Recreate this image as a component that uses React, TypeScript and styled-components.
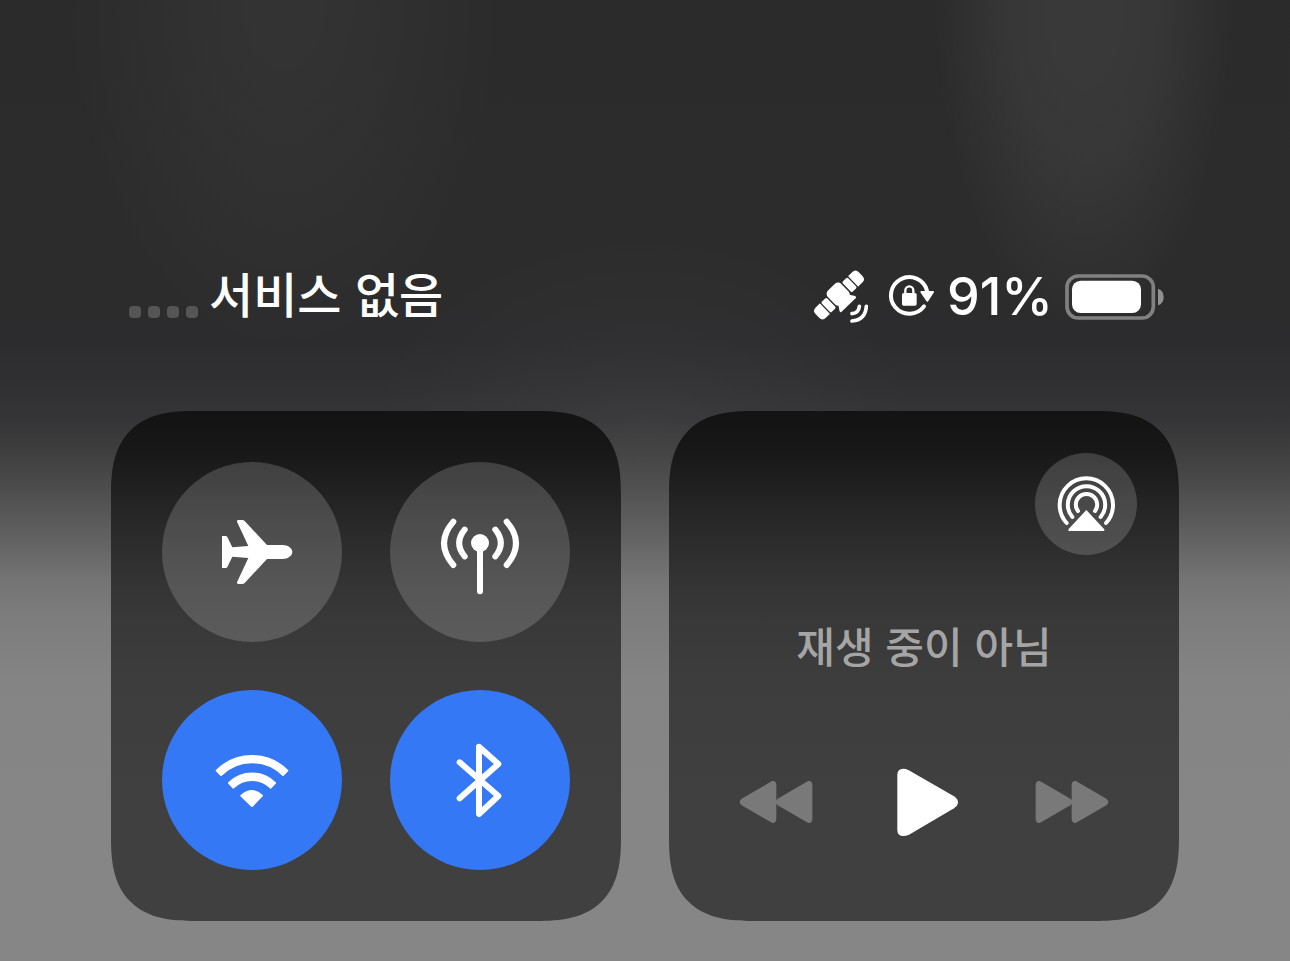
import React from "react";
import styled, { createGlobalStyle } from "styled-components";

const GlobalStyle = createGlobalStyle`
  *, *::before, *::after { box-sizing: border-box; }
  body {
    margin: 0;
    background: #868686;
    color: #fff;
    font-family: Inter, "Noto Sans CJK KR", sans-serif;
    -webkit-font-smoothing: antialiased;
  }
`;

const Screen = styled.main`
  min-height: 100vh;
  padding: 264px 111px 40px;
  background:
    radial-gradient(
      ellipse 150px 330px at 84% 0,
      rgba(255, 255, 255, 0.065) 20%,
      rgba(255, 255, 255, 0.055) 50%,
      rgba(255, 255, 255, 0.02) 82%,
      transparent
    ),
    radial-gradient(
      ellipse 220px 360px at 22% 0,
      rgba(255, 255, 255, 0.04) 10%,
      rgba(255, 255, 255, 0.025) 50%,
      transparent
    ),
    radial-gradient(ellipse 280px 200px at 50% 430px, rgba(255, 255, 255, 0.035), transparent),
    linear-gradient(
      #2b2b2b 0,
      #2c2c2c 240px,
      #2c2c2e 340px,
      #303033 385px,
      #353537 420px,
      #3e3e3f 450px,
      #494949 480px,
      #575757 513px,
      #656565 547px,
      #747474 580px,
      #7c7c7c 613px,
      #848484 680px,
      #868686 800px
    );
`;

const StatusBar = styled.header`
  display: flex;
  align-items: center;
  justify-content: space-between;
  height: 66px;
  margin-bottom: 81px;
  padding: 0 15px 0 18px;
`;

const StatusGroup = styled.div`
  display: flex;
  align-items: center;
  gap: 11px;
`;

const Signal = styled.div`
  display: flex;
  gap: 7px;
  padding-top: 30px;
`;

const SignalDot = styled.span`
  width: 12px;
  height: 12px;
  border-radius: 4px;
  background: #555;
`;

const Carrier = styled.span`
  padding-bottom: 10px;
  font-family: "Noto Sans CJK KR", sans-serif;
  font-size: 48px;
  font-weight: 500;
  line-height: 56px;
`;

const BatteryLevel = styled.span`
  font-size: 52px;
  font-weight: 500;
  line-height: 66px;
`;

const Modules = styled.div`
  display: grid;
  grid-template-columns: 1fr 1fr;
  gap: 48px;
`;

const Module = styled.section`
  min-height: 510px;
  border-radius: 68px;
  background: linear-gradient(
    #131313 0,
    #171717 36px,
    #1e1e1e 69px,
    #262626 102px,
    #2d2d2d 136px,
    #333 169px,
    #383838 202px,
    #3d3d3d 269px,
    #404040 400px
  );
  @supports (corner-shape: superellipse(1.5)) {
    border-radius: 84px;
    corner-shape: superellipse(1.4);
  }
`;

const Connectivity = styled(Module)`
  display: grid;
  grid-template-columns: 180px 180px;
  grid-template-rows: 180px 180px;
  place-content: center;
  gap: 48px;
`;

const NowPlaying = styled(Module)`
  display: flex;
  flex-direction: column;
  padding: 42px 42px 84px;
`;

const IconButton = styled.button`
  display: flex;
  align-items: center;
  justify-content: center;
  padding: 0;
  border: 0;
  background: none;
  color: inherit;
  cursor: pointer;

  &:disabled {
    color: #797979;
    cursor: default;
  }
`;

const RoundButton = styled(IconButton)<{ $size: number; $active?: boolean }>`
  width: ${(p) => p.$size}px;
  height: ${(p) => p.$size}px;
  border-radius: 50%;
  background: ${(p) => (p.$active ? "#3478f6" : "rgba(255, 255, 255, 0.17)")};
`;

const AirPlaySlot = styled.div`
  display: flex;
  justify-content: flex-end;
`;

const TrackTitle = styled.h2`
  margin: 58px 0 0;
  color: #a5a5a5;
  font-family: "Noto Sans CJK KR", sans-serif;
  font-size: 42px;
  font-weight: 500;
  line-height: 64px;
  text-align: center;
`;

const Transport = styled.div`
  display: flex;
  align-items: center;
  justify-content: space-between;
  margin-top: auto;
  padding: 0 28px;
`;

const Icon = styled.svg`
  display: block;
  flex: none;
  fill: currentColor;
`;

const stroke = {
  fill: "none",
  stroke: "currentColor",
  strokeLinecap: "round" as const,
  strokeLinejoin: "round" as const,
};

const SatelliteIcon = () => (
  <Icon width="64" height="60" viewBox="30 33 192 180" role="img" aria-label="위성">
    <g transform="translate(114 117) rotate(-44) scale(1.12)">
      <rect x="-25" y="-29" width="50" height="52" rx="12" />
      <path d="M-17 14 H17 L29 32 Q31 37 26 37 H-26 Q-31 37 -29 32Z" />
      <rect x="29" y="-19" width="20" height="38" rx="4" />
      <path d="M54-18H68Q79-18 79-7V7Q79 18 68 18H54Z" strokeWidth="3" stroke="currentColor" strokeLinejoin="round" />
      <rect x="-49" y="-19" width="20" height="38" rx="4" />
      <path d="M-54-18H-68Q-79-18-79-7V7Q-79 18-68 18H-54Z" strokeWidth="3" stroke="currentColor" strokeLinejoin="round" />
    </g>
    <path d="M153 173Q173 171 175 151M153 195Q193 192 196 151" {...stroke} strokeWidth="11" />
  </Icon>
);

const RotationLockIcon = () => (
  <Icon width="50" height="50" viewBox="255 51 150 150" role="img" aria-label="화면 방향 고정">
    <path d="M369 154A55 55 0 1 1 378 107" {...stroke} strokeWidth="12" />
    <path d="M361 111H396L379 137Z" stroke="currentColor" strokeWidth="6" strokeLinejoin="round" />
    <rect x="303" y="114" width="44" height="38" rx="5" />
    <path d="M313 118V106A12 12 0 0 1 337 106V118" {...stroke} strokeWidth="7" />
  </Icon>
);

const BatteryIcon = () => (
  <Icon width="100" height="48" viewBox="372 51 300 144" aria-hidden="true">
    <rect x="381" y="60" width="259" height="126" rx="34" {...stroke} stroke="#818181" strokeWidth="11" />
    <rect x="396" y="74" width="207" height="97" rx="26" />
    <path d="M654 98Q671 103 671 123Q671 143 654 148Z" fill="#919191" />
  </Icon>
);

const AirplaneIcon = () => (
  <Icon width="90" height="90" viewBox="21 21 270 270" aria-hidden="true">
    <path d="M66 108H77Q80 108 82 111L97 142L145 138L111 65Q110 60 115 60H127Q131 60 134 63L201 135H248C264 135 277 145 277 156S264 177 248 177H201L134 249Q131 252 127 252H115Q110 252 111 247L145 174L97 170L82 201Q80 204 77 204H66Z" />
  </Icon>
);

const CellularIcon = () => (
  <Icon width="90" height="90" viewBox="15 21 270 270" aria-hidden="true">
    <circle cx="150" cy="129" r="27" />
    <path d="M150 140V274" {...stroke} strokeWidth="18" />
    <path
      d="M104 89Q71 129 104 169M196 89Q229 129 196 169M70 65Q14 129 70 195M230 65Q286 129 230 195"
      {...stroke}
      strokeWidth="18"
    />
  </Icon>
);

const WifiIcon = () => (
  <Icon width="90" height="90" viewBox="21 0 270 270" aria-hidden="true">
    <g stroke="currentColor" strokeWidth="6" strokeLinejoin="round">
      <path d="M50 107A150 150 0 0 1 262 107L249 120A132 132 0 0 0 63 120Z" />
      <path d="M87 144A98 98 0 0 1 225 144L212 158A79 79 0 0 0 100 158Z" />
      <path d="M124 182Q156 154 186 182L156 213Z" />
    </g>
  </Icon>
);

const BluetoothIcon = () => (
  <Icon width="90" height="90" viewBox="15 15 270 270" aria-hidden="true">
    <path d="M89 97L205 198L147 252V50L205 102L89 205" {...stroke} strokeWidth="18" />
  </Icon>
);

const AirPlayIcon = () => (
  <Icon width="66" height="66" viewBox="69 78 198 198" aria-hidden="true">
    <path
      d="M110 234A80 80 0 1 1 228 234M127 216A56 56 0 1 1 212 216M144 198A32 32 0 1 1 195 198"
      {...stroke}
      strokeWidth="12"
    />
    <path d="M169 195L222 252Q226 258 219 258H120Q112 258 116 252Z" />
  </Icon>
);

const skipPath =
  "M962 94Q958 91 954 94Q948 97 948 104V208Q948 215 954 218Q958 220 964 217L1052 166Q1064 156 1052 146Z";

const ForwardIcon = () => (
  <Icon width="74" height="42" viewBox="946 93 222 126" aria-hidden="true">
    <path d={skipPath} />
    <path d={skipPath} transform="translate(108 0)" />
  </Icon>
);

const RewindIcon = () => (
  <Icon width="74" height="42" viewBox="946 93 222 126" aria-hidden="true">
    <g transform="matrix(-1 0 0 1 2114 0)">
      <path d={skipPath} />
      <path d={skipPath} transform="translate(108 0)" />
    </g>
  </Icon>
);

const PlayIcon = () => (
  <Icon width="70" height="70" viewBox="507 52 210 210" aria-hidden="true">
    <path d="M532 76Q532 57 550 57Q557 57 565 61L702 140Q714 148 714 158Q714 168 702 176L567 255Q558 259 550 259Q532 259 532 241Z" />
  </Icon>
);

export default function App() {
  return (
    <>
      <GlobalStyle />
      <Screen>
        <StatusBar>
          <StatusGroup>
            <Signal aria-hidden="true">
              <SignalDot />
              <SignalDot />
              <SignalDot />
              <SignalDot />
            </Signal>
            <Carrier lang="ko">서비스 없음</Carrier>
          </StatusGroup>
          <StatusGroup>
            <SatelliteIcon />
            <RotationLockIcon />
            <BatteryLevel>91%</BatteryLevel>
            <BatteryIcon />
          </StatusGroup>
        </StatusBar>
        <Modules>
          <Connectivity aria-label="연결">
            <RoundButton type="button" $size={180} aria-label="에어플레인 모드" aria-pressed={false}>
              <AirplaneIcon />
            </RoundButton>
            <RoundButton type="button" $size={180} aria-label="셀룰러 데이터" aria-pressed={false}>
              <CellularIcon />
            </RoundButton>
            <RoundButton type="button" $size={180} $active aria-label="Wi-Fi" aria-pressed={true}>
              <WifiIcon />
            </RoundButton>
            <RoundButton type="button" $size={180} $active aria-label="Bluetooth" aria-pressed={true}>
              <BluetoothIcon />
            </RoundButton>
          </Connectivity>
          <NowPlaying aria-label="미디어">
            <AirPlaySlot>
              <RoundButton type="button" $size={102} aria-label="AirPlay">
                <AirPlayIcon />
              </RoundButton>
            </AirPlaySlot>
            <TrackTitle lang="ko">재생 중이 아님</TrackTitle>
            <Transport>
              <IconButton type="button" aria-label="이전" disabled>
                <RewindIcon />
              </IconButton>
              <IconButton type="button" aria-label="재생">
                <PlayIcon />
              </IconButton>
              <IconButton type="button" aria-label="다음" disabled>
                <ForwardIcon />
              </IconButton>
            </Transport>
          </NowPlaying>
        </Modules>
      </Screen>
    </>
  );
}
